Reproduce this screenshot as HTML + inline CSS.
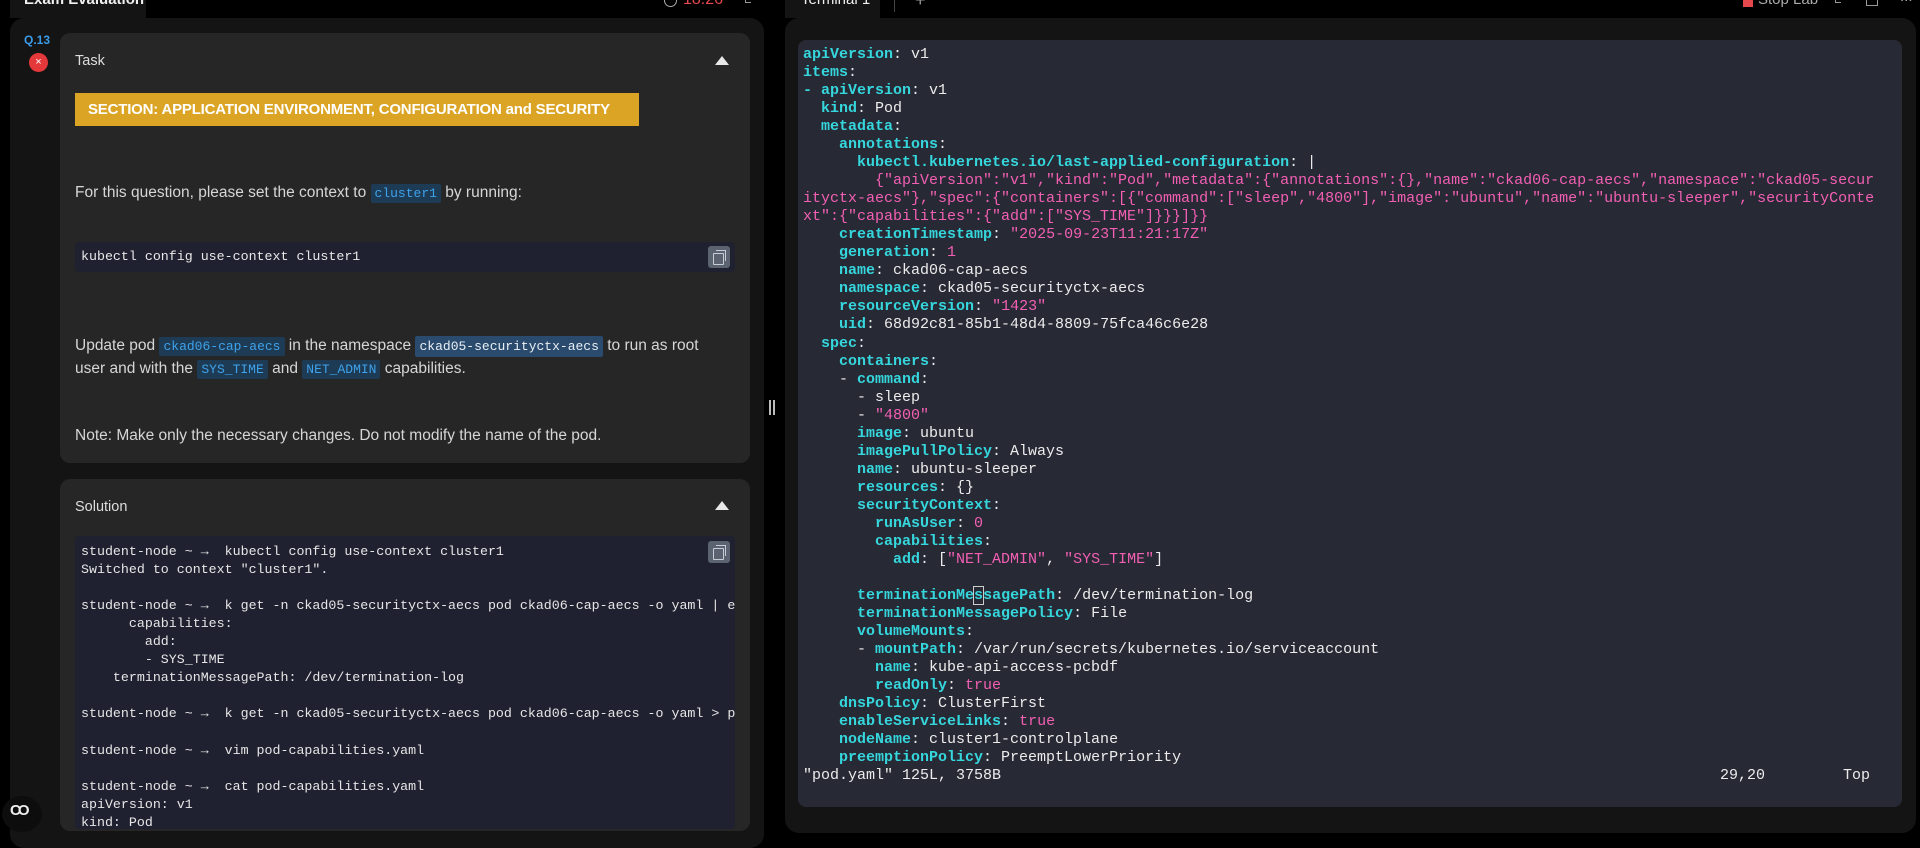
<!DOCTYPE html>
<html><head><meta charset="utf-8"><style>
*{margin:0;padding:0;box-sizing:border-box}
body{width:1920px;height:836px;background:#000;position:relative;overflow:hidden;font-family:"Liberation Sans",sans-serif;color:#ddd}
.abs{position:absolute}
.mono{font-family:"Liberation Mono","DejaVu Sans Mono",monospace}
.lp{left:10px;top:18px;width:754px;height:830px;background:#141414;border-radius:14px}
.card{background:#262626;border-radius:10px}
.tri{width:0;height:0;border-left:7px solid transparent;border-right:7px solid transparent;border-bottom:9px solid #e8e8e8}
.ic{background:#1e3b55;color:#3ea2ea;font-family:"Liberation Mono",monospace;font-size:13px;padding:2px 4px;border-radius:2px}
.ic2{background:#2a4b6d;color:#e8eef5;font-family:"Liberation Mono",monospace;font-size:13px;padding:3px 4px;border-radius:2px}
.p{font-size:15.5px;color:#d6d6d6;left:75px}
.cb{background:#1f2130;border-radius:4px}
.copy{width:22px;height:22px;background:#5b6270;border-radius:3px}
.copy:before{content:"";position:absolute;left:5px;top:7px;width:9px;height:10px;border:1.5px solid #c8ccd4;border-radius:1px}
.copy:after{content:"";position:absolute;left:8px;top:4px;width:9px;height:10px;border:1.5px solid #c8ccd4;border-left:none;border-bottom:none}
pre{font-family:"Liberation Mono","DejaVu Sans Mono",monospace;white-space:pre}
.sol{font-size:13.3px;line-height:18.04px;color:#e6e6e6}
.term{font-size:15px;line-height:18.03px;color:#ececec}
.k{color:#35d6dc;font-weight:bold}
.s{color:#f35fb3}
</style></head><body>
<div class="abs" style="left:10px;top:0;width:136px;height:18px;background:#141414"></div>
<div class="abs" style="left:24px;top:-9px;font-size:15px;font-weight:bold;color:#f0f0f0">Exam Evaluation</div>
<div class="abs" style="left:664px;top:-6px;width:13px;height:13px;border:1.5px solid #aaa;border-radius:50%"></div>
<div class="abs" style="left:683px;top:-9px;font-size:16px;color:#e5484d">18:26</div>
<div class="abs" style="left:745px;top:-4px;width:6px;height:7px;border-left:1.5px solid #999;border-bottom:1.5px solid #999"></div>

<div class="abs" style="left:785px;top:0;width:95px;height:18px;background:#141414"></div>
<div class="abs" style="left:801px;top:-9px;font-size:15px;color:#f0f0f0">Terminal 1</div>
<div class="abs" style="left:894px;top:0;width:1px;height:12px;background:#444"></div>
<div class="abs" style="left:915px;top:-10px;font-size:18px;color:#999">+</div>
<div class="abs" style="left:1743px;top:-2px;width:10px;height:9px;background:#e5484d"></div>
<div class="abs" style="left:1758px;top:-9px;font-size:15px;color:#aaa">Stop Lab</div>
<div class="abs" style="left:1835px;top:-4px;width:6px;height:7px;border-left:1.5px solid #999;border-bottom:1.5px solid #999"></div>
<div class="abs" style="left:1866px;top:-4px;width:12px;height:10px;border:1.5px solid #999;border-top:none"></div>
<div class="abs" style="left:1900px;top:-12px;font-size:15px;color:#aaa">...</div>

<div class="abs lp"></div>
<div class="abs" style="left:24px;top:33px;font-size:12px;font-weight:bold;color:#3a9be8">Q.13</div>
<div class="abs" style="left:29px;top:53px;width:19px;height:19px;border-radius:50%;background:#e5383b;color:#fff;font-size:11px;text-align:center;line-height:18px">×</div>

<div class="abs card" style="left:60px;top:33px;width:690px;height:430px"></div>
<div class="abs" style="left:75px;top:53px;font-size:14.5px;color:#ddd">Task</div>
<div class="abs tri" style="left:715px;top:56px"></div>
<div class="abs" style="left:75px;top:93px;width:564px;height:33px;background:#dba424"></div>
<div class="abs" style="left:88px;top:101px;font-size:15px;font-weight:bold;color:#fff;letter-spacing:-0.2px">SECTION: APPLICATION ENVIRONMENT, CONFIGURATION and SECURITY</div>
<div class="abs p" style="top:184px">For this question, please set the context to <span class="ic">cluster1</span> by running:</div>
<div class="abs cb" style="left:75px;top:242px;width:660px;height:30px"></div>
<div class="abs mono" style="left:81px;top:249px;font-size:13.3px;color:#e8e8e8">kubectl config use-context cluster1</div>
<div class="abs copy" style="left:708px;top:246px"></div>
<div class="abs p" style="top:335px;line-height:22px;width:640px">Update pod <span class="ic">ckad06-cap-aecs</span> in the namespace <span class="ic2">ckad05-securityctx-aecs</span> to run as root user and with the <span class="ic">SYS_TIME</span> and <span class="ic">NET_ADMIN</span> capabilities.</div>
<div class="abs p" style="top:427px">Note: Make only the necessary changes. Do not modify the name of the pod.</div>

<div class="abs card" style="left:60px;top:479px;width:690px;height:352px"></div>
<div class="abs" style="left:75px;top:499px;font-size:14.5px;color:#ddd">Solution</div>
<div class="abs tri" style="left:715px;top:501px"></div>
<div class="abs cb" style="left:75px;top:536px;width:660px;height:293px;overflow:hidden">
<pre class="sol" style="position:absolute;left:6px;top:7px">student-node ~ →  kubectl config use-context cluster1
Switched to context "cluster1".

student-node ~ →  k get -n ckad05-securityctx-aecs pod ckad06-cap-aecs -o yaml | egrep
      capabilities:
        add:
        - SYS_TIME
    terminationMessagePath: /dev/termination-log

student-node ~ →  k get -n ckad05-securityctx-aecs pod ckad06-cap-aecs -o yaml > pod.yaml

student-node ~ →  vim pod-capabilities.yaml

student-node ~ →  cat pod-capabilities.yaml
apiVersion: v1
kind: Pod</pre>
</div>
<div class="abs copy" style="left:708px;top:541px"></div>
<div class="abs" style="left:2px;top:796px;width:40px;height:36px;border-radius:50%;background:#0d0d0d"></div>
<div class="abs" style="left:10px;top:802px;font-size:15px;font-weight:bold;color:#eee;letter-spacing:-3px">CO</div>

<div class="abs" style="left:769px;top:400px;width:2px;height:15px;background:#bbb"></div>
<div class="abs" style="left:773px;top:400px;width:2px;height:15px;background:#bbb"></div>

<div class="abs" style="left:785px;top:18px;width:1131px;height:815px;background:#141414;border-radius:14px"></div>
<div class="abs" style="left:798px;top:40px;width:1104px;height:767px;background:#272935;border-radius:8px"></div>
<pre class="abs term" style="left:803px;top:46px"><span class="k">apiVersion</span>: v1
<span class="k">items</span>:
<span class="k">-</span> <span class="k">apiVersion</span>: v1
  <span class="k">kind</span>: Pod
  <span class="k">metadata</span>:
    <span class="k">annotations</span>:
      <span class="k">kubectl.kubernetes.io/last-applied-configuration</span>: |
        <span class="s">{"apiVersion":"v1","kind":"Pod","metadata":{"annotations":{},"name":"ckad06-cap-aecs","namespace":"ckad05-secur</span>
<span class="s">ityctx-aecs"},"spec":{"containers":[{"command":["sleep","4800"],"image":"ubuntu","name":"ubuntu-sleeper","securityConte</span>
<span class="s">xt":{"capabilities":{"add":["SYS_TIME"]}}}]}}</span>
    <span class="k">creationTimestamp</span>: <span class="s">"2025-09-23T11:21:17Z"</span>
    <span class="k">generation</span>: <span class="s">1</span>
    <span class="k">name</span>: ckad06-cap-aecs
    <span class="k">namespace</span>: ckad05-securityctx-aecs
    <span class="k">resourceVersion</span>: <span class="s">"1423"</span>
    <span class="k">uid</span>: 68d92c81-85b1-48d4-8809-75fca46c6e28
  <span class="k">spec</span>:
    <span class="k">containers</span>:
    - <span class="k">command</span>:
      - sleep
      - <span class="s">"4800"</span>
      <span class="k">image</span>: ubuntu
      <span class="k">imagePullPolicy</span>: Always
      <span class="k">name</span>: ubuntu-sleeper
      <span class="k">resources</span>: {}
      <span class="k">securityContext</span>:
        <span class="k">runAsUser</span>: <span class="s">0</span>
        <span class="k">capabilities</span>:
          <span class="k">add</span>: [<span class="s">"NET_ADMIN"</span>, <span class="s">"SYS_TIME"</span>]

      <span class="k">terminationMe<span style="outline:1px solid #ccc">s</span>sagePath</span>: /dev/termination-log
      <span class="k">terminationMessagePolicy</span>: File
      <span class="k">volumeMounts</span>:
      - <span class="k">mountPath</span>: /var/run/secrets/kubernetes.io/serviceaccount
        <span class="k">name</span>: kube-api-access-pcbdf
        <span class="k">readOnly</span>: <span class="s">true</span>
    <span class="k">dnsPolicy</span>: ClusterFirst
    <span class="k">enableServiceLinks</span>: <span class="s">true</span>
    <span class="k">nodeName</span>: cluster1-controlplane
    <span class="k">preemptionPolicy</span>: PreemptLowerPriority
"pod.yaml" 125L, 3758B</pre>
<pre class="abs term" style="left:1720px;top:767px">29,20</pre>
<pre class="abs term" style="left:1843px;top:767px">Top</pre>
</body></html>
